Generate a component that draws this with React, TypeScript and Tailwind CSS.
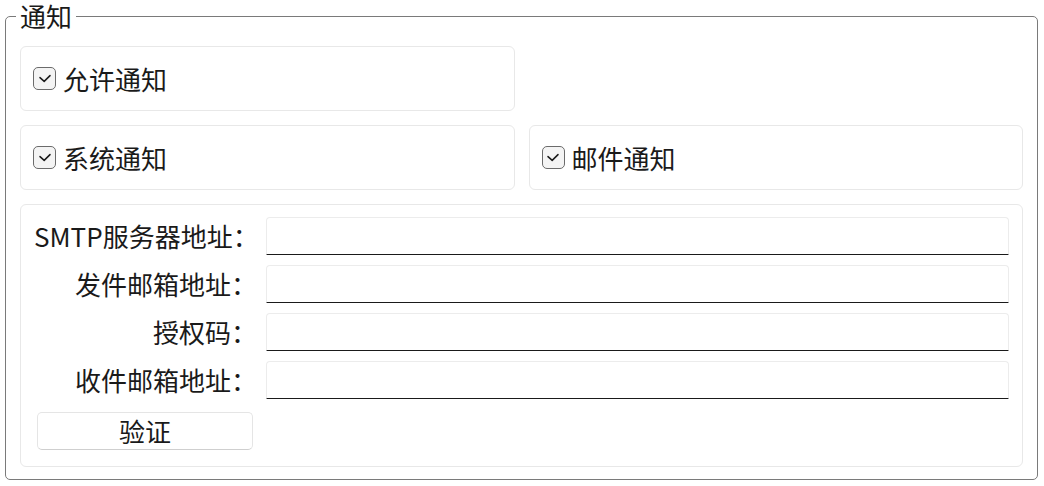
import { useState } from "react";

const font = { fontFamily: '"Noto Sans CJK SC", "Noto Sans", sans-serif' };

const CheckBox = ({ label }: { label: string }) => {
  const [checked, setChecked] = useState(true);
  return (
    <label className="flex items-center gap-[7px] cursor-default select-none">
      <span
        onClick={() => setChecked(!checked)}
        className="flex h-[23px] w-[23px] items-center justify-center rounded-[5px] border-[1.5px] border-[#6b6b6b] bg-[#f4f4f4]"
      >
        {checked && (
          <svg width="14" height="11" viewBox="0 0 14 11" fill="none">
            <path
              d="M2 4.6 L6.2 8.4 L12 2.6"
              stroke="#1a1a1a"
              strokeWidth="1.5"
              strokeLinecap="round"
              strokeLinejoin="round"
            />
          </svg>
        )}
      </span>
      <span className="text-[26px] leading-none text-[#1a1a1a]">{label}</span>
    </label>
  );
};

const Card = ({ children, className }: { children: React.ReactNode; className?: string }) => (
  <div className={"rounded-[6px] border border-[#e8e8e8] bg-white " + (className || "")}>
    {children}
  </div>
);

const fields = ["SMTP服务器地址：", "发件邮箱地址：", "授权码：", "收件邮箱地址："];

export default function App() {
  const [values, setValues] = useState<string[]>(["", "", "", ""]);

  return (
    <div className="h-[486px] w-[1044px] bg-white pl-[5px] pr-[6px] pb-[6px]" style={font}>
      <fieldset className="h-[480px] rounded-[5px] border border-[#7a7a7a] px-[14px] pb-[14px]">
        <legend className="ml-[-4px] px-[4px] text-[26px] leading-[32px] text-[#1a1a1a]">
          通知
        </legend>
        <div className="mt-[14px] flex flex-col gap-[14px]">
          <div className="grid grid-cols-2 gap-[14px]">
            <Card className="flex h-[65px] items-center pl-[12px]">
              <CheckBox label="允许通知" />
            </Card>
          </div>
          <div className="grid grid-cols-2 gap-[14px]">
            <Card className="flex h-[65px] items-center pl-[12px]">
              <CheckBox label="系统通知" />
            </Card>
            <Card className="flex h-[65px] items-center pl-[12px]">
              <CheckBox label="邮件通知" />
            </Card>
          </div>
          <Card className="h-[263px] pl-[13px] pr-[13px] pt-[12px]">
            <div className="flex flex-col gap-[10px]">
              {fields.map((f, i) => (
                <div key={f} className="flex items-center">
                  <div className="mr-[9px] w-[223px] shrink-0 text-right text-[26px] leading-none text-[#1a1a1a] whitespace-nowrap">
                    {f}
                  </div>
                  <input
                    value={values[i]}
                    onChange={(e) => {
                      const next = [...values];
                      next[i] = e.target.value;
                      setValues(next);
                    }}
                    className="h-[38px] flex-1 rounded-t-[4px] border border-[#ececec] border-b-[#1a1a1a] bg-white px-2 text-[18px] outline-none"
                  />
                </div>
              ))}
            </div>
            <button className="ml-[3px] mt-[13px] h-[38px] w-[216px] rounded-[5px] border border-[#e5e5e5] border-b-[#cfcfcf] bg-white text-[26px] leading-none text-[#1a1a1a]">
              验证
            </button>
          </Card>
        </div>
      </fieldset>
    </div>
  );
}
